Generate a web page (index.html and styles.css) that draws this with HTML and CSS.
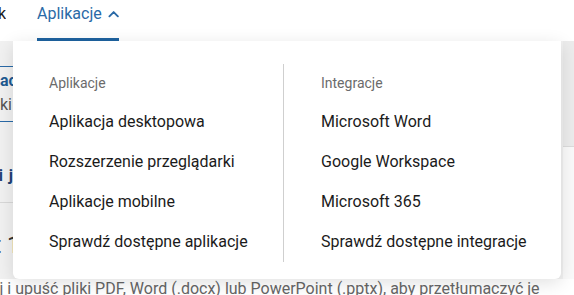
FILE: index.html
```html
<!DOCTYPE html>
<html lang="pl">
<head>
<meta charset="utf-8">
<link rel="stylesheet" href="styles.css">
</head>
<body>
<div class="page">
  <header class="nav">
    <div class="nav-clip"><span class="nav-item">Cennik</span></div>
    <div class="nav-active">
      <span class="nav-label">Aplikacje</span>
      <svg class="chev" width="12" height="8" viewBox="0 0 12 8"><path d="M1.5 6.5 L6 2 L10.5 6.5" fill="none" stroke="currentColor" stroke-width="2" stroke-linecap="round" stroke-linejoin="round"/></svg>
    </div>
  </header>
  <main class="main">
    <div class="left">
      <div class="tabbox">
        <div class="clip bold-blue"><span>Tłumacz</span></div>
        <div class="clip grey"><span>pliki</span></div>
      </div>
      <div class="clip more"><span>funkcji j</span></div>
      <div class="hr"></div>
      <div class="clip big"><span>tekst 1</span></div>
    </div>
    <div class="mid"></div>
    <div class="right">
      <div class="rbox"></div>
    </div>
  </main>
  <div class="bottom"><span>Przeciągnij i upuść pliki PDF, Word (.docx) lub PowerPoint (.pptx), aby przetłumaczyć je</span></div>

  <div class="dropdown">
    <div class="col">
      <div class="head">Aplikacje</div>
      <a class="item">Aplikacja desktopowa</a>
      <a class="item">Rozszerzenie przeglądarki</a>
      <a class="item">Aplikacje mobilne</a>
      <a class="item">Sprawdź dostępne aplikacje</a>
    </div>
    <div class="divider"></div>
    <div class="col col-r">
      <div class="head">Integracje</div>
      <a class="item">Microsoft Word</a>
      <a class="item">Google Workspace</a>
      <a class="item">Microsoft 365</a>
      <a class="item">Sprawdź dostępne integracje</a>
    </div>
  </div>
</div>
</body>
</html>
```
FILE: styles.css
```css
* { box-sizing: border-box; }
html, body { margin: 0; padding: 0; }
body {
  width: 574px;
  height: 295px;
  overflow: hidden;
  background: #fff;
  font-family: Roboto, "Liberation Sans", sans-serif;
  color: #1b1b1b;
}
.page {
  position: relative;
  width: 574px;
  height: 295px;
  overflow: hidden;
  display: flex;
  flex-direction: column;
}
.nav {
  height: 41px;
  display: flex;
  align-items: stretch;
  background: #fff;
  flex: none;
}
.nav-clip {
  width: 6px;
  display: flex;
  justify-content: flex-end;
  overflow: hidden;
  padding-top: 4px;
}
.nav-item {
  font-size: 16px;
  line-height: 20px;
  color: #1b1b1b;
  white-space: nowrap;
}
.nav-active {
  margin-left: 31px;
  display: flex;
  align-items: flex-start;
  gap: 6px;
  padding-top: 4px;
  border-bottom: 3px solid #1e63a0;
  width: 82px;
  color: #2a6aa7;
}
.nav-label {
  font-size: 16px;
  line-height: 20px;
}
.chev { margin-top: 6px; }
.main {
  flex: 1;
  display: flex;
  background: #f1f1f1;
}
.left {
  width: 13px;
  flex: none;
  display: flex;
  flex-direction: column;
  overflow: hidden;
}
.clip {
  display: flex;
  justify-content: flex-end;
  overflow: hidden;
  white-space: nowrap;
  flex: none;
}
.tabbox {
  margin-top: 25px;
  height: 56px;
  border-top: 1px solid #2a6aa7;
  border-bottom: 1px solid #2a6aa7;
  display: flex;
  flex-direction: column;
  padding-top: 2px;
  width: 40px;
}
.tabbox .clip { width: 25px; }
.bold-blue {
  font-weight: 700;
  font-size: 16px;
  line-height: 24px;
  color: #1e5a92;
}
.grey {
  font-size: 16px;
  line-height: 24px;
  color: #555;
}
.tabbox .grey { width: 12px; }
.more {
  margin-top: 42px;
  width: 14px;
  font-weight: 700;
  font-size: 16px;
  line-height: 24px;
  color: #1e3f75;
  letter-spacing: 1px;
}
.hr {
  margin-top: 14px;
  height: 1px;
  background: #d8d8d8;
  width: 13px;
  flex: none;
}
.big {
  margin-top: 28px;
  width: 20px;
  font-size: 23px;
  line-height: 30px;
  color: #333;
}
.mid { flex: 1; }
.right {
  width: 11px;
  flex: none;
  background: #fafafa;
}
.rbox {
  height: 106px;
  background: #ececec;
  border-bottom: 1px solid #dcdcdc;
}
.bottom {
  flex: none;
  height: 16px;
  overflow: hidden;
  white-space: nowrap;
  background: #fff;
  font-size: 16px;
  line-height: 20px;
  color: #666;
}
.bottom span {
  display: inline-block;
  margin-left: -75px;
  margin-top: -2px;
}
.dropdown {
  position: absolute;
  left: 13px;
  top: 41px;
  width: 548px;
  height: 238px;
  background: #fff;
  border-radius: 0 0 6px 6px;
  box-shadow: 0 4px 18px rgba(0, 0, 0, 0.12);
  display: flex;
  padding: 23px 0 17px;
}
.col {
  width: 270px;
  padding: 9px 0 0 36px;
  display: flex;
  flex-direction: column;
}
.col-r { width: auto; flex: 1; padding-left: 37px; }
.divider {
  width: 1px;
  background: #cfcfcf;
}
.head {
  font-size: 14px;
  line-height: 20px;
  color: #6b6b6b;
  margin-bottom: 9px;
}
.item {
  font-size: 16px;
  line-height: 40px;
  color: #1b1b1b;
  white-space: nowrap;
}
```
